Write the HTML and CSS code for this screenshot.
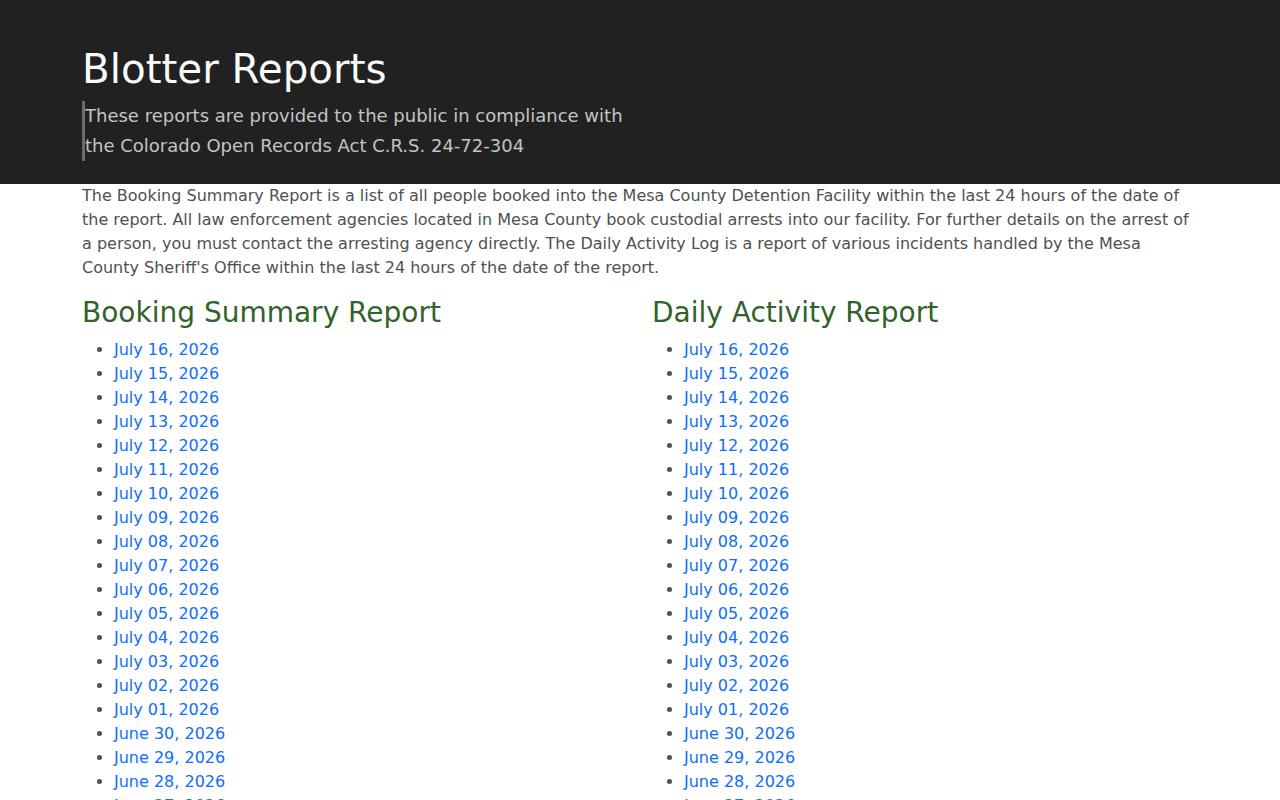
FILE: index.html
```html
<!DOCTYPE html>
<html lang="en">
<head>
<meta charset="utf-8">
<title>Blotter Reports</title>
<link rel="stylesheet" href="styles.css">
</head>
<body>
<header class="hero">
  <div class="container">
    <h1 class="hero-title">Blotter Reports</h1>
    <blockquote class="hero-quote">
      These reports are provided to the public in compliance with<br>
      the Colorado Open Records Act C.R.S. 24-72-304
    </blockquote>
  </div>
</header>
<main class="container">
  <p class="intro">The Booking Summary Report is a list of all people booked into the Mesa County Detention Facility within the last 24 hours of the date of the report. All law enforcement agencies located in Mesa County book custodial arrests into our facility. For further details on the arrest of a person, you must contact the arresting agency directly. The Daily Activity Log is a report of various incidents handled by the Mesa County Sheriff's Office within the last 24 hours of the date of the report.</p>
  <div class="columns">
    <section class="report-col">
      <h2 class="report-title">Booking Summary Report</h2>
      <ul class="report-list">
        <li><a href="#">July 16, 2026</a></li>
        <li><a href="#">July 15, 2026</a></li>
        <li><a href="#">July 14, 2026</a></li>
        <li><a href="#">July 13, 2026</a></li>
        <li><a href="#">July 12, 2026</a></li>
        <li><a href="#">July 11, 2026</a></li>
        <li><a href="#">July 10, 2026</a></li>
        <li><a href="#">July 09, 2026</a></li>
        <li><a href="#">July 08, 2026</a></li>
        <li><a href="#">July 07, 2026</a></li>
        <li><a href="#">July 06, 2026</a></li>
        <li><a href="#">July 05, 2026</a></li>
        <li><a href="#">July 04, 2026</a></li>
        <li><a href="#">July 03, 2026</a></li>
        <li><a href="#">July 02, 2026</a></li>
        <li><a href="#">July 01, 2026</a></li>
        <li><a href="#">June 30, 2026</a></li>
        <li><a href="#">June 29, 2026</a></li>
        <li><a href="#">June 28, 2026</a></li>
        <li><a href="#">June 27, 2026</a></li>
        <li><a href="#">June 26, 2026</a></li>
        <li><a href="#">June 25, 2026</a></li>
      </ul>
    </section>
    <section class="report-col">
      <h2 class="report-title">Daily Activity Report</h2>
      <ul class="report-list">
        <li><a href="#">July 16, 2026</a></li>
        <li><a href="#">July 15, 2026</a></li>
        <li><a href="#">July 14, 2026</a></li>
        <li><a href="#">July 13, 2026</a></li>
        <li><a href="#">July 12, 2026</a></li>
        <li><a href="#">July 11, 2026</a></li>
        <li><a href="#">July 10, 2026</a></li>
        <li><a href="#">July 09, 2026</a></li>
        <li><a href="#">July 08, 2026</a></li>
        <li><a href="#">July 07, 2026</a></li>
        <li><a href="#">July 06, 2026</a></li>
        <li><a href="#">July 05, 2026</a></li>
        <li><a href="#">July 04, 2026</a></li>
        <li><a href="#">July 03, 2026</a></li>
        <li><a href="#">July 02, 2026</a></li>
        <li><a href="#">July 01, 2026</a></li>
        <li><a href="#">June 30, 2026</a></li>
        <li><a href="#">June 29, 2026</a></li>
        <li><a href="#">June 28, 2026</a></li>
        <li><a href="#">June 27, 2026</a></li>
        <li><a href="#">June 26, 2026</a></li>
        <li><a href="#">June 25, 2026</a></li>
      </ul>
    </section>
  </div>
</main>
</body>
</html>
```

FILE: styles.css
```css
* {
  box-sizing: border-box;
}

body {
  margin: 0;
  font-family: "DejaVu Sans", Verdana, sans-serif;
  font-size: 16px;
  line-height: 1.5;
  color: #505050;
  background: #fff;
}

.container {
  width: 1140px;
  margin: 0 auto;
  padding: 0 12px;
}

/* dark page banner */
.hero {
  background: #212121;
  padding: 45px 0 23px;
}

.hero-title {
  margin: 0 0 8px;
  font-size: 40.4px;
  font-weight: 400;
  line-height: 48px;
  color: #fafafa;
}

.hero-quote {
  margin: 0;
  padding-left: 0;
  border-left: 3px solid #6b6b6b;
  font-size: 18px;
  line-height: 30px;
  color: #c4c4c4;
}

.intro {
  margin: 0 0 16px;
}

/* two report columns */
.columns {
  display: grid;
  grid-template-columns: 1fr 1fr;
  column-gap: 24px;
}

.report-title {
  margin: 0 0 8px;
  font-size: 28px;
  font-weight: 400;
  line-height: 1.2;
  color: #30632a;
}

.report-list {
  margin: 0 0 16px;
  padding-left: 32px;
}

.report-list a {
  color: #0d6efd;
  text-decoration: none;
}
```
